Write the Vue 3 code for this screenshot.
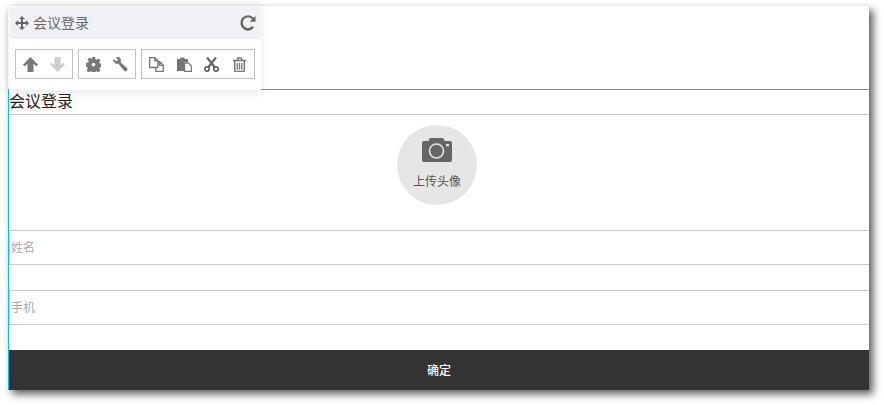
<script setup>
</script>

<template>
  <div class="stage">
    <div class="page">
      <div class="banner"></div>
      <div class="content">
        <div class="title">会议登录</div>
        <div class="avatar-row">
          <div class="avatar">
            <svg class="camera" viewBox="0 0 30 24" width="30" height="24">
              <path fill="#666" fill-rule="evenodd" d="M8 0h13l2 3h5a2 2 0 0 1 2 2v17a2 2 0 0 1-2 2H2a2 2 0 0 1-2-2V5a2 2 0 0 1 2-2h4.500zM14.500 5.200a7.800 7.800 0 1 0 0 15.600a7.800 7.800 0 0 0 0-15.600zM14.500 6.800a6.200 6.200 0 1 1 0 12.400a6.200 6.200 0 0 1 0-12.400zM24 6h3v2.200h-3z"/>
            </svg>
            <span class="avatar-text">上传头像</span>
          </div>
        </div>
        <div class="field"><span>姓名</span></div>
        <div class="gap"></div>
        <div class="field"><span>手机</span></div>
        <div class="gap"></div>
        <div class="button-row">确定</div>
      </div>
    </div>

    <div class="panel">
      <div class="panel-head">
        <svg class="move" viewBox="0 0 14 14" width="14" height="14">
          <path fill="#666" d="M7 0l3 3H8v3h3V4l3 3-3 3V8H8v3h2l-3 3-3-3h2V8H3v2L0 7l3-3v2h3V3H4z"/>
        </svg>
        <span class="panel-title">会议登录</span>
        <svg class="refresh" viewBox="0 0 16 16" width="16" height="16">
          <path fill="#666" d="M15.500 1v5.800H9.700l2.300-2.300A5 5 0 0 0 3 8a5 5 0 0 0 9 3l2.100 1.600A7.600 7.600 0 0 1 .5 8 7.600 7.600 0 0 1 13.700 2.800z"/>
        </svg>
      </div>
      <div class="panel-body">
        <div class="group">
          <svg viewBox="0 0 15 15" width="15" height="15"><path fill="#777" d="M7.500 0l7.500 7.800-1.800 1.500-2.700-2.600V15h-6V6.700L1.800 9.300 0 7.800z"/></svg>
          <svg viewBox="0 0 15 15" width="15" height="15"><path fill="#ccc" d="M7.500 15L0 7.200l1.800-1.500 2.700 2.600V0h6v8.300l2.700-2.600L15 7.200z"/></svg>
        </div>
        <div class="group">
          <svg viewBox="0 0 16 16" width="15" height="15"><path fill="#777" fill-rule="evenodd" d="M6.300 0h3.400l.4 2.300 1.300.6 1.900-1.300 2.100 2.100-1.300 1.900.6 1.300 2.300.4v3.400l-2.300.4-.6 1.300 1.300 1.900-2.100 2.100-1.900-1.300-1.300.6-.4 2.300H6.300l-.4-2.300-1.300-.6-1.900 1.300-2.100-2.100 1.300-1.900-.6-1.300L0 9.700V6.300l2.300-.4.6-1.300-1.300-1.900 2.100-2.100 1.900 1.300 1.300-.6zM8 6a2 2 0 1 0 0 4a2 2 0 0 0 0-4z"/></svg>
          <svg viewBox="0 0 16 16" width="15" height="15"><path fill="#777" d="M0 4.200L2.800 7a1.500 1.500 0 0 0 1.400.4l1.500-.4 6.400 8c1.400 1.500 4.400-1.400 3-2.900L8 5.700l.4-2.300A3.900 3.900 0 0 0 2.900 0l2.600 2.600L3.300 4.800.6 2.200z"/></svg>
        </div>
        <div class="group">
          <svg viewBox="0 0 15 15" width="15" height="15"><path fill="none" stroke="#777" stroke-width="1.300" d="M.7.700h5.300l2.800 2.800v7H.7zM9 4.700h1.800l3.500 3.500v6.100H6.800v-3.600M10.500 5v3.300h3.500M5.800 1v2.800h2.800"/></svg>
          <svg viewBox="0 0 15 15" width="15" height="15"><path fill="#777" d="M0 2h3.500V.5h4V2H11v3.500H7V14H0z"/><path fill="#fff" stroke="#777" stroke-width="1.200" d="M7.600 6.100h3.900l2.900 2.900v5.400H7.600z"/></svg>
          <svg viewBox="0 0 15 15" width="15" height="15"><path fill="none" stroke="#666" stroke-width="2.200" d="M3 .5l8 10M12 .5L4 10.500"/><circle cx="3" cy="12" r="2.200" fill="none" stroke="#666" stroke-width="1.800"/><circle cx="12" cy="12" r="2.200" fill="none" stroke="#666" stroke-width="1.800"/></svg>
          <svg viewBox="0 0 15 15" width="15" height="15"><path fill="none" stroke="#777" stroke-width="1.500" d="M2.700 4v9.500a1 1 0 0 0 1 1h7.600a1 1 0 0 0 1-1V4M1 3.600h13M5 3.400L6 1h3l1 2.400"/><path fill="none" stroke="#777" stroke-width="1.300" d="M5.300 6v6.800M7.500 6v6.800M9.700 6v6.800"/></svg>
        </div>
      </div>
    </div>
  </div>
</template>

<style>
html, body { margin: 0; background: #fff; }
</style>

<style scoped>
.stage {
  position: relative;
  width: 884px;
  height: 405px;
  overflow: hidden;
  background: #fff;
  font-family: "Noto Sans CJK SC", "Liberation Sans", sans-serif;
  box-sizing: border-box;
  padding: 6px 0 0 8px;
}
.page {
  width: 861px;
  height: 384px;
  box-shadow: 4px 4px 8px rgba(0, 0, 0, 0.65);
  background: #fff;
  display: flex;
  flex-direction: column;
}
.banner { height: 83px; flex: none; }
.content {
  flex: 1;
  border-left: 1px solid #00c3f3;
  border-top: 1px solid #00bdee;
  display: flex;
  flex-direction: column;
}
.title {
  height: 25px;
  box-sizing: border-box;
  flex: none;
  line-height: 20px;
  font-size: 16px;
  color: #222;
  border-bottom: 1px solid #ccc;
}
.avatar-row {
  height: 115px;
  flex: none;
  display: flex;
  justify-content: center;
  padding: 10px 4px 0 0;
  box-sizing: border-box;
}
.avatar {
  width: 80px;
  height: 80px;
  border-radius: 50%;
  background: #e6e6e6;
  display: flex;
  flex-direction: column;
  align-items: center;
}
.camera { margin-top: 13px; }
.avatar-text { font-size: 12px; color: #555; margin-top: 10px; line-height: 18px; }
.field {
  height: 35px;
  flex: none;
  box-sizing: border-box;
  border: 1px solid #ccc;
  border-right: none;
  font-size: 12px;
  color: #aaa;
  line-height: 31px;
  padding-left: 1px;
}
.gap { height: 25px; flex: none; }
.button-row {
  height: 40px;
  flex: none;
  background: #333;
  color: #fff;
  font-size: 12px;
  font-weight: 500;
  line-height: 39px;
  text-align: center;
}
.panel {
  position: absolute;
  left: 9px;
  top: 6px;
  width: 252px;
  height: 84px;
  background: #fff;
  box-shadow: 0 2px 10px rgba(0, 0, 0, 0.1);
  display: flex;
  flex-direction: column;
}
.panel-head {
  margin: 1px 1px 0;
  height: 32px;
  flex: none;
  background: #f0f0f5;
  display: flex;
  align-items: center;
  padding: 0 4px 0 5px;
}
.panel-title { font-size: 14px; line-height: 18px; padding-bottom: 2px; color: #666; margin-left: 4px; flex: 1; }
.panel-body { display: flex; gap: 5px; padding: 10px 6px; }
.group {
  height: 30px;
  box-sizing: border-box;
  border: 1px solid #c4c4c4;
  display: flex;
  align-items: center;
  justify-content: space-between;
  padding: 0 7px;
  width: 58px;
}
.group:last-child { width: 114px; }
</style>
